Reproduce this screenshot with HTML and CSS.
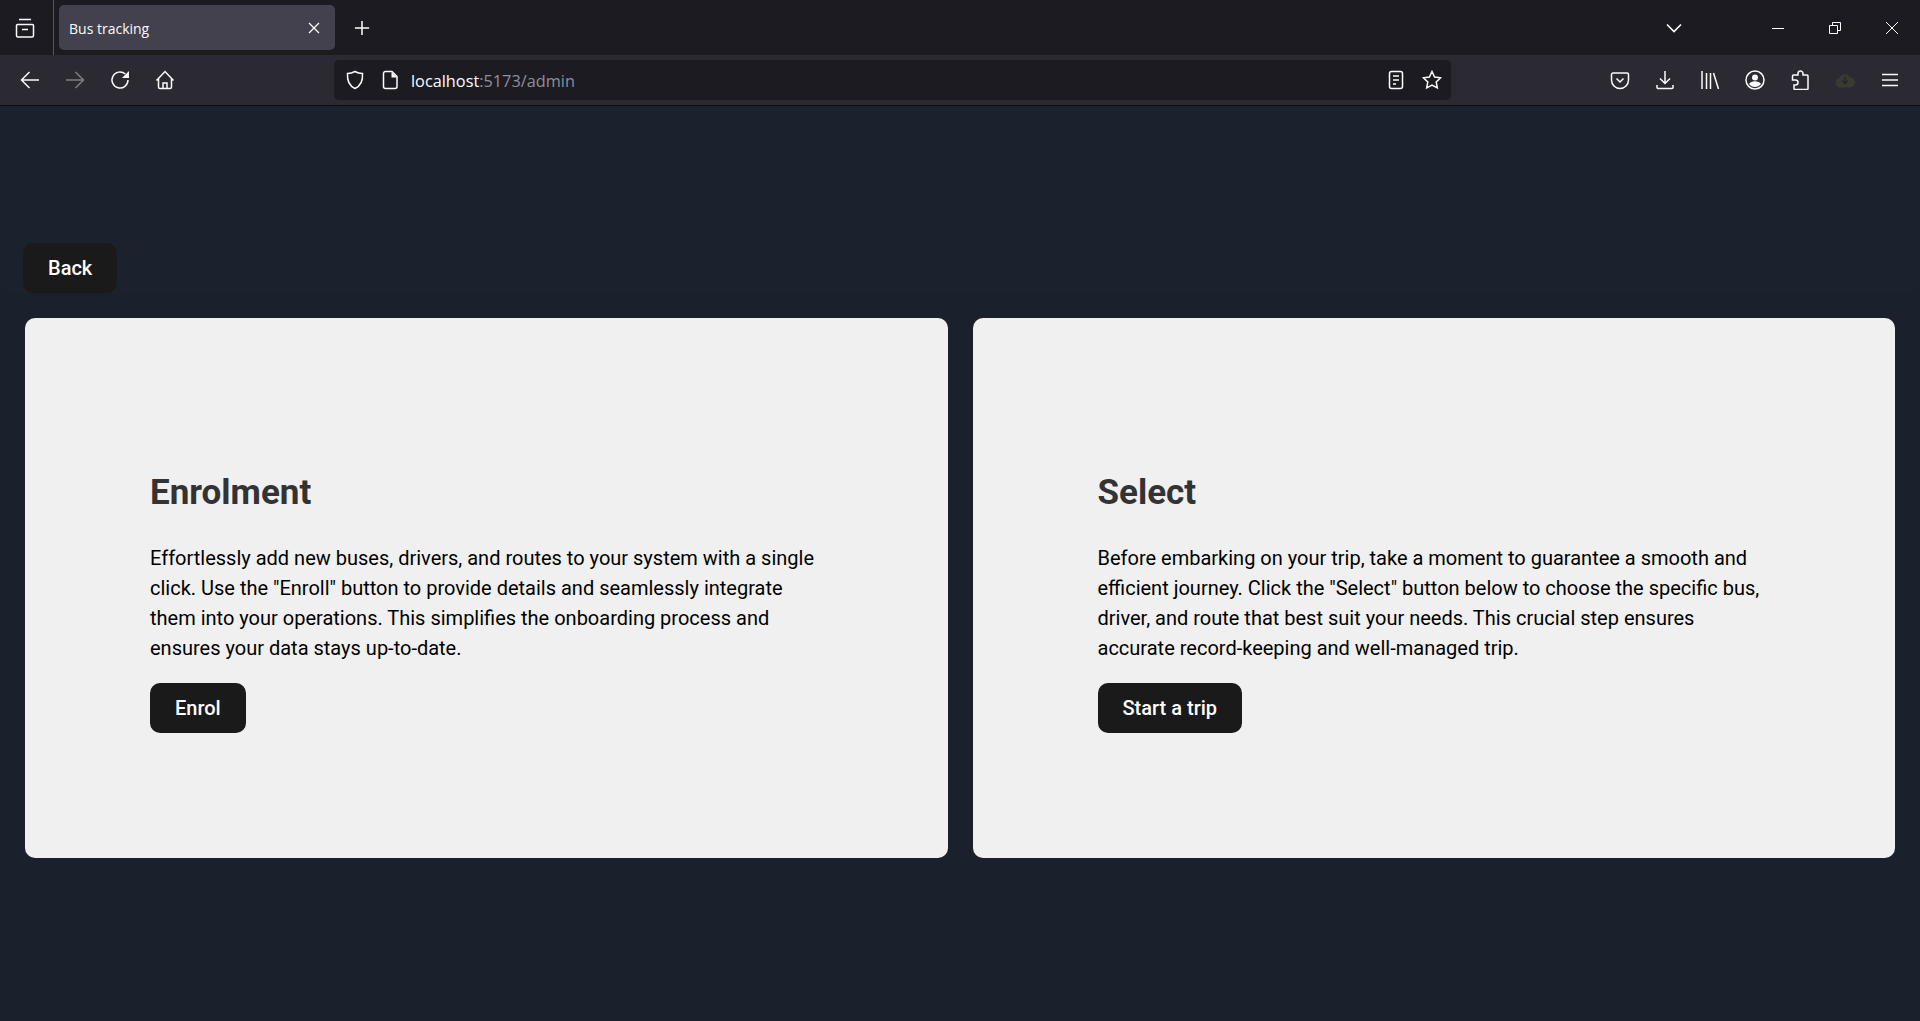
FILE: index.html
```html
<!DOCTYPE html>
<html>
<head>
    <title>Bus tracking</title>
    <link rel="stylesheet" href="styles.css">
</head>
<body>
    <div class="tabstrip">
        <div class="tab-menu">
            <svg class="icon" viewBox="0 0 20 20"><path d="M4 1.500h12M2.500 6.500h15a1 1 0 0 1 1 1v10a1.500 1.500 0 0 1-1.500 1.500H3a1.500 1.500 0 0 1-1.500-1.500v-10a1 1 0 0 1 1-1zM7 11.500h6"/></svg>
        </div>
        <div class="tab">
            <span class="tab-title">Bus tracking</span>
            <svg class="tab-close" viewBox="0 0 12 12"><path d="M1 1l10 10M11 1L1 11"/></svg>
        </div>
        <svg class="new-tab" viewBox="0 0 18 18"><path d="M9 1v16M1 9h16"/></svg>
        <div class="strip-space"></div>
        <svg class="tab-list" viewBox="0 0 16 10"><path d="M1 1.500l7 7 7-7"/></svg>
        <div class="win-buttons">
            <svg class="win-btn" viewBox="0 0 12 12"><path d="M0 6.500h12"/></svg>
            <svg class="win-btn" viewBox="0 0 12 12"><path d="M.5 3.500h8v8h-8zM3.500 3.500V.5h8v8h-3"/></svg>
            <svg class="win-btn" viewBox="0 0 12 12"><path d="M0 0l12 12M12 0L0 12"/></svg>
        </div>
    </div>

    <div class="toolbar">
        <div class="nav-buttons">
            <svg class="icon" viewBox="0 0 20 20"><path d="M19 10H1.500M9.500 2l-8 8 8 8"/></svg>
            <svg class="icon dim" viewBox="0 0 20 20"><path d="M1 10h17.500M10.500 2l8 8-8 8"/></svg>
            <svg class="icon" viewBox="0 0 20 20"><path d="M18 10a8 8 0 1 1-2.700-6"/><path class="solid" d="M19 1v7h-7z"/></svg>
            <svg class="icon" viewBox="0 0 20 20"><path d="M1.500 10.500L10 1.500l8.500 9M3.500 8.500v8.500a1.500 1.500 0 0 0 1.500 1.500h10a1.500 1.500 0 0 0 1.500-1.500V8.500M8 18.500V13h4v5.500"/></svg>
        </div>
        <div class="urlbar">
            <svg class="icon" viewBox="0 0 20 20"><path d="M10 1.500c2.500 1.500 5 2 7.500 2 .5 7-2 12.500-7.500 15-5.500-2.500-8-8-7.500-15 2.500 0 5-.5 7.500-2z"/></svg>
            <svg class="icon page-icon" viewBox="0 0 20 20"><path d="M3.500 3.500a2 2 0 0 1 2-2h6.500l5 5v10a2 2 0 0 1-2 2h-9.500a2 2 0 0 1-2-2z"/><path class="solid" d="M11.500 2l5.500 5.500h-5.500z"/></svg>
            <span class="url"><span class="host">localhost</span>:5173/admin</span>
            <svg class="icon" viewBox="0 0 20 20"><rect x="3.500" y="1.500" width="13" height="17" rx="2"/><path d="M7 6h6M7 10h6M7 14h3"/></svg>
            <svg class="icon star" viewBox="0 0 20 20"><path d="M10 1.500l2.600 5.500 6 .8-4.400 4.100 1.100 6L10 15l-5.300 2.900 1.100-6L1.400 7.800l6-.8z"/></svg>
        </div>
        <div class="tools">
            <svg class="icon" viewBox="0 0 20 20"><path d="M3 3h14a1.500 1.500 0 0 1 1.500 1.500V10a8.500 8.500 0 0 1-17 0V4.500A1.500 1.500 0 0 1 3 3zM6.500 8.500l3.500 3.500 3.500-3.500"/></svg>
            <svg class="icon" viewBox="0 0 20 20"><path d="M10 1v12.500M5 8.500l5 5 5-5M2 15v2.500a1 1 0 0 0 1 1h14a1 1 0 0 0 1-1V15"/></svg>
            <svg class="icon" viewBox="0 0 20 20"><path d="M2 1v18M6.500 3v16M10.500 3v16M13.500 3l5 16"/></svg>
            <svg class="icon" viewBox="0 0 20 20"><circle cx="10" cy="10" r="9"/><circle class="solid" cx="10" cy="7.500" r="3"/><path class="solid" d="M4 14c1-2 3.500-2.800 6-2.800s5 .8 6 2.800c-1.500 2-3.800 3-6 3s-4.500-1-6-3z"/></svg>
            <svg class="icon" viewBox="0 0 20 20"><path d="M8 4.500V3.500a2.500 2.500 0 0 1 5 0v1.500h4a1 1 0 0 1 1 1v12.500a1 1 0 0 1-1 1H5a1 1 0 0 1-1-1V15h1.500a2.500 2.500 0 0 0 0-5H2.500V6a1 1 0 0 1 1-1H8z"/></svg>
            <svg class="icon sync" viewBox="0 0 20 20"><path class="cloud" d="M5 17.500a4.500 4.500 0 0 1-.8-8.900A5.800 5.800 0 0 1 15 7.500a5 5 0 0 1 0 10z"/><path class="cloud-arrow" d="M10 6.500v7M7 10.500l3 3 3-3"/></svg>
            <svg class="icon" viewBox="0 0 20 20"><path d="M2 4.500h16M2 10h16M2 15.500h16"/></svg>
        </div>
    </div>

    <div class="page">
        <div class="top-bar">
            <button class="btn">Back</button>
        </div>
        <div class="cards">
            <div class="card">
                <div class="card-body">
                    <h2>Enrolment</h2>
                    <p>Effortlessly add new buses, drivers, and routes to your system with a single click. Use the "Enroll" button to provide details and seamlessly integrate them into your operations. This simplifies the onboarding process and ensures your data stays up-to-date.</p>
                    <button class="btn">Enrol</button>
                </div>
            </div>
            <div class="card">
                <div class="card-body">
                    <h2>Select</h2>
                    <p>Before embarking on your trip, take a moment to guarantee a smooth and efficient journey. Click the "Select" button below to choose the specific bus, driver, and route that best suit your needs. This crucial step ensures accurate record-keeping and well-managed trip.</p>
                    <button class="btn">Start a trip</button>
                </div>
            </div>
        </div>
    </div>
</body>
</html>
```

FILE: styles.css
```css
* {
  box-sizing: border-box;
}

html, body {
  height: 100%;
}

body {
  margin: 0;
  display: flex;
  flex-direction: column;
  overflow: hidden;
  background-color: #1a202c;
  font-family: Roboto, sans-serif;
}

svg {
  display: block;
  flex: none;
  fill: none;
  stroke: #fbfbfe;
  stroke-width: 1.5;
}

svg .solid {
  fill: #fbfbfe;
  stroke: none;
}

.icon {
  width: 20px;
  height: 20px;
}

.dim {
  opacity: 0.4;
}

/* browser chrome */
.tabstrip {
  height: 55px;
  display: flex;
  align-items: center;
  background-color: #1c1b22;
}

.tab-menu {
  width: 54px;
  height: 55px;
  padding-left: 15px;
  display: flex;
  align-items: center;
  border-right: 1px solid #57565c;
}

.tab {
  width: 276px;
  height: 45px;
  margin-left: 5px;
  padding: 0 15px 0 10px;
  display: flex;
  align-items: center;
  justify-content: space-between;
  background-color: #42414d;
  border-radius: 5px;
}

.tab-title {
  padding-top: 1px;
  color: #fbfbfe;
  font-family: "Open Sans", sans-serif;
  font-size: 14px;
}

.tab-close {
  width: 12px;
  height: 12px;
  stroke-width: 1.3;
}

.new-tab {
  width: 16px;
  height: 16px;
  margin-left: 19px;
  stroke-width: 1.7;
}

.strip-space {
  flex: 1;
}

.tab-list {
  width: 16px;
  height: 10px;
  margin-right: 90px;
  stroke-width: 1.6;
}

.win-buttons {
  display: flex;
  align-items: center;
  gap: 45px;
  margin-right: 22px;
}

.win-btn {
  width: 12px;
  height: 12px;
  stroke-width: 1;
}

.toolbar {
  height: 51px;
  padding-bottom: 1px;
  display: flex;
  align-items: center;
  background-color: #2b2a33;
  border-bottom: 1px solid #0c0c0d;
}

.nav-buttons {
  width: 334px;
  padding-left: 20px;
  display: flex;
  align-items: center;
  gap: 25px;
}

.urlbar {
  width: 1117px;
  height: 40px;
  padding: 0 9px 0 11px;
  display: flex;
  align-items: center;
  background-color: #1c1b22;
  border-radius: 5px;
}

.page-icon {
  margin-left: 15px;
}

.url {
  flex: 1;
  margin-left: 11px;
  padding-top: 2px;
  color: #8f8f9d;
  font-family: "Open Sans", sans-serif;
  font-size: 16.3px;
}

.host {
  color: #fbfbfe;
}

.star {
  margin-left: 16px;
}

.tools {
  flex: 1;
  padding: 0 20px 0 159px;
  display: flex;
  align-items: center;
  justify-content: space-between;
}

.sync .cloud {
  fill: #3a3a34;
  stroke: none;
}

.sync .cloud-arrow {
  stroke: #26252c;
}

/* page */
.page {
  flex: 1;
  display: flex;
  flex-direction: column;
}

.top-bar {
  height: 187px;
  padding: 137px 23px 0;
  background-color: #1b212d;
  border-radius: 0 0 12px 12px;
}

.btn {
  height: 50px;
  padding: 0 24px;
  color: #fff;
  font-family: Roboto, sans-serif;
  font-size: 20px;
  font-weight: 500;
  background-color: #1a1a1a;
  border: 1px solid transparent;
  border-radius: 10px;
}

.cards {
  margin-top: 25px;
  padding: 0 25px;
  display: grid;
  grid-template-columns: 1fr 1fr;
  gap: 25px;
}

.card {
  height: 540px;
  padding: 0 125px;
  display: flex;
  align-items: center;
  background-color: #f0f0f0;
  border-radius: 10px;
}

.card-body {
  width: 100%;
  padding-top: 29px;
}

.card h2 {
  margin: 0 0 29px;
  color: #333;
  font-size: 35px;
  font-weight: 700;
  line-height: 42px;
}

.card p {
  margin: 0 0 20px;
  color: #000;
  font-size: 20px;
  line-height: 30px;
}
```
